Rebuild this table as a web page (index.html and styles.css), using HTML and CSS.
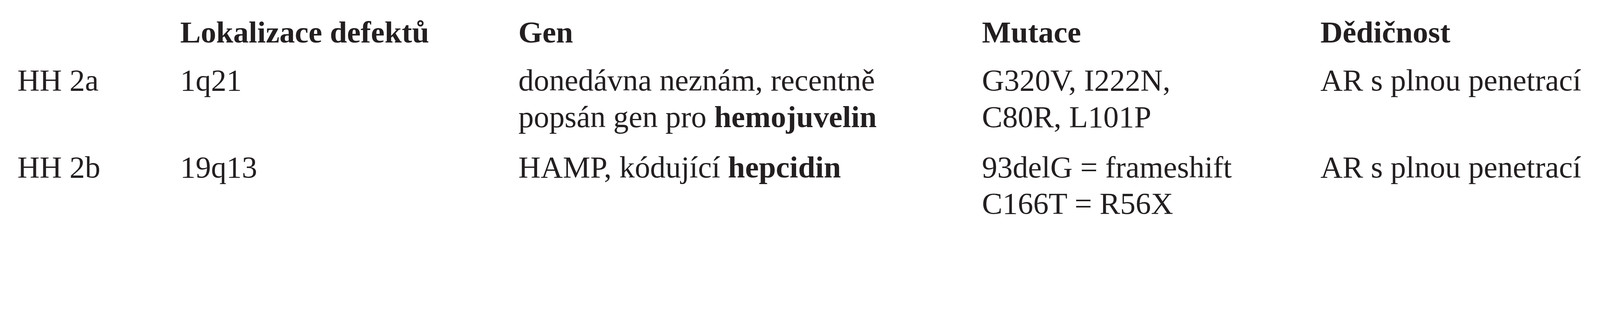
FILE: index.html
```html
<!DOCTYPE html>
<html lang="cs">
<head>
<meta charset="utf-8">
<title>Tabulka</title>
<link rel="stylesheet" href="styles.css">
</head>
<body>
<div class="table">
  <div class="row head">
    <div class="cell"></div>
    <div class="cell">Lokalizace defektů</div>
    <div class="cell">Gen</div>
    <div class="cell">Mutace</div>
    <div class="cell">Dědičnost</div>
  </div>
  <div class="row r1">
    <div class="cell">HH 2a</div>
    <div class="cell">1q21</div>
    <div class="cell">donedávna neznám, recentně<br>popsán gen pro <b>hemojuvelin</b></div>
    <div class="cell">G320V, I222N,<br>C80R, L101P</div>
    <div class="cell">AR s plnou penetrací</div>
  </div>
  <div class="row r2">
    <div class="cell">HH 2b</div>
    <div class="cell">19q13</div>
    <div class="cell">HAMP, kódující <b>hepcidin</b></div>
    <div class="cell">93delG = frameshift<br>C166T = R56X</div>
    <div class="cell">AR s plnou penetrací</div>
  </div>
</div>
</body>
</html>
```

FILE: styles.css
```css
:root {
  --u: calc(100vw / 5247);
}
html, body {
  margin: 0;
  padding: 0;
  background: #ffffff;
  overflow: hidden;
}
body {
  font-family: "Liberation Serif", "Times New Roman", serif;
  font-size: calc(101 * var(--u));
  line-height: calc(120 * var(--u));
  color: #231f20;
}
.table {
  display: flex;
  flex-direction: column;
  padding-top: calc(46 * var(--u));
  padding-left: calc(57 * var(--u));
}
.row {
  display: grid;
  grid-template-columns:
    calc(534 * var(--u))
    calc(1109 * var(--u))
    calc(1520 * var(--u))
    calc(1110 * var(--u))
    auto;
}
.head {
  font-weight: bold;
}
.r1 {
  margin-top: calc(38 * var(--u));
}
.r2 {
  margin-top: calc(45 * var(--u));
}
.cell {
  white-space: nowrap;
}
b {
  font-weight: bold;
}
```
